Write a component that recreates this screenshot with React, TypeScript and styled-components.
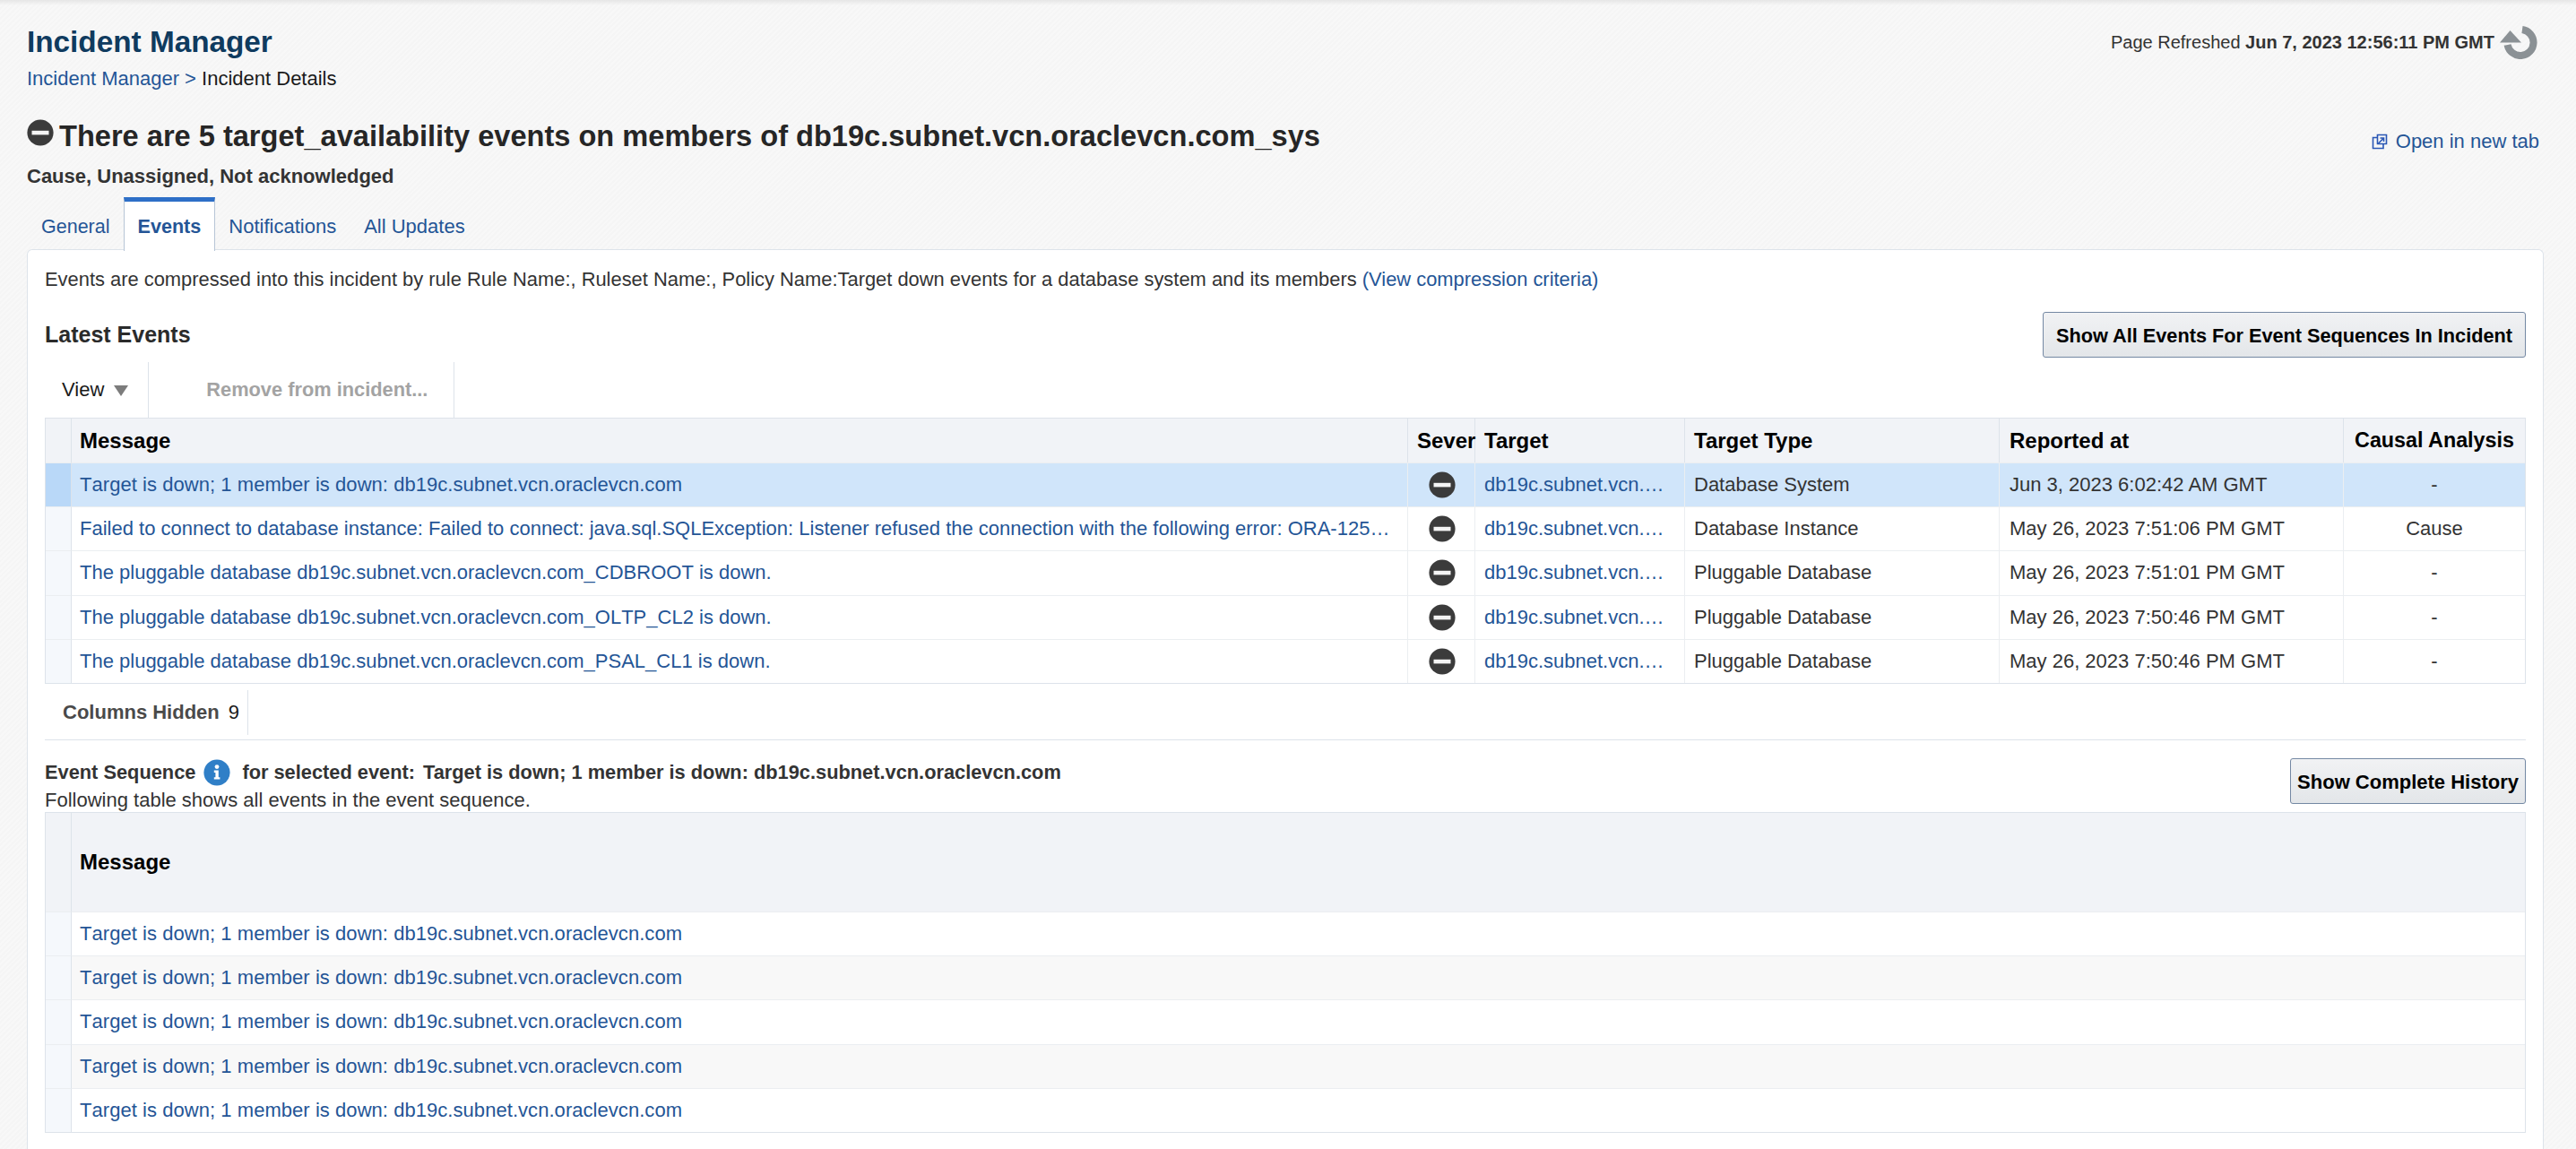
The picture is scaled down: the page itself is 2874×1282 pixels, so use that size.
import React, { FC } from "react";
import styled, { createGlobalStyle } from "styled-components";

const GlobalStyle = createGlobalStyle`
    html, body {
        margin: 0;
        padding: 0;
    }
    body {
        font-family: "Liberation Sans", Arial, Helvetica, sans-serif;
        font-size: 22px;
        color: #333;
        background-color: #f7f7f7;
        background-image:
            linear-gradient(180deg, #e6e6e6 0, rgba(230,230,230,0) 6px),
            repeating-linear-gradient(135deg, #f8f8f8 0, #f8f8f8 2px, #f5f5f5 2px, #f5f5f5 4px);
        background-repeat: no-repeat, repeat;
    }
`;

const LINK = "#245596";
const BORDER = "#dde3ea";
const CELL_LINE = "#ebeef1";

const Page = styled.div`
    width: 2874px;
    height: 1282px;
    box-sizing: border-box;
    padding: 27px 36px 0 30px;
    overflow: hidden;
`;

const TopRow = styled.div`
    display: flex;
    justify-content: space-between;
    align-items: center;
    height: 40px;
`;

const AppTitle = styled.div`
    font-size: 33.3px;
    line-height: 40px;
    font-weight: 700;
    color: #0f3b5f;
`;

const Refreshed = styled.div`
    display: flex;
    align-items: center;
    gap: 5px;
    font-size: 20px;
    color: #333;
    margin-right: 4px;
    & b {
        font-weight: 700;
    }
`;

const Breadcrumb = styled.div`
    margin-top: 6px;
    line-height: 30px;
    color: #1a1a1a;
`;

const Link = styled.a`
    color: ${LINK};
    text-decoration: none;
`;

const CellLink = styled(Link)<{ $spaced?: boolean }>`
    font-kerning: none;
    letter-spacing: ${(p) => (p.$spaced ? "0.05px" : "0")};
`;

const HeadRow = styled.div`
    display: flex;
    justify-content: space-between;
    height: 40px;
    margin-top: 29px;
`;

const Headline = styled.h1`
    display: flex;
    gap: 6px;
    margin: 0;
    font-size: 32.6px;
    line-height: 40px;
    font-weight: 700;
    color: #262626;
    & > svg {
        margin-top: 1px;
    }
`;

const NewTab = styled.a`
    display: flex;
    align-items: center;
    gap: 9px;
    align-self: flex-end;
    height: 28px;
    margin-right: 5px;
    color: ${LINK};
    text-decoration: none;
`;

const Status = styled.div`
    margin-top: 10px;
    line-height: 30px;
    font-weight: 700;
    color: #333;
`;

const Tabs = styled.div`
    display: flex;
    height: 60px;
    margin: 8px 0 -2px 1px;
    position: relative;
    z-index: 1;
    & > a:first-child {
        font-size: 21.5px;
    }
    & > a:nth-child(3) {
        padding-right: 16px;
    }
`;

const Tab = styled.a<{ $active?: boolean }>`
    display: flex;
    align-items: center;
    box-sizing: border-box;
    padding: ${(p) => (p.$active ? "1px 15px 0" : "6px 15px 0")};
    color: ${LINK};
    font-size: ${(p) => (p.$active ? "21.6px" : "22px")};
    font-weight: ${(p) => (p.$active ? 700 : 400)};
    background: ${(p) => (p.$active ? "#fff" : "transparent")};
    border-top: ${(p) => (p.$active ? "5px solid #2e6fc7" : "0")};
    border-left: ${(p) => (p.$active ? "1px solid #b7c5d6" : "0")};
    border-right: ${(p) => (p.$active ? "1px solid #b7c5d6" : "0")};
`;

const Panel = styled.div`
    background: #fff;
    border: 1px solid ${BORDER};
    border-bottom: 0;
    border-radius: 6px 6px 0 0;
    padding: 18px 19px 18px 19px;
`;

const Note = styled.div`
    font-size: 21.9px;
    line-height: 30px;
    color: #333;
`;

const SectionRow = styled.div`
    display: flex;
    justify-content: space-between;
    align-items: center;
    height: 50px;
    margin-top: 21px;
`;

const SectionTitle = styled.div`
    font-size: 25px;
    font-weight: 700;
    color: #2b2b2b;
`;

const Button = styled.button<{ $compact?: boolean }>`
    box-sizing: border-box;
    height: 51px;
    padding: ${(p) => (p.$compact ? "3px 7px 0" : "3px 14px 0")};
    font-family: inherit;
    font-size: ${(p) => (p.$compact ? "22px" : "21.7px")};
    font-weight: 700;
    color: #000;
    background: linear-gradient(180deg, #f1f2f4 0%, #e3e6e9 100%);
    border: 1px solid #7488a3;
    border-radius: 3px;
`;

const Toolbar = styled.div`
    display: flex;
    height: 62px;
    margin-top: 6px;
`;

const ToolItem = styled.div<{ $pad: string; $muted?: boolean }>`
    display: flex;
    align-items: center;
    gap: 11px;
    padding: ${(p) => p.$pad};
    border-right: 1px solid ${BORDER};
    color: ${(p) => (p.$muted ? "#a3a3a3" : "#1a1a1a")};
    font-size: ${(p) => (p.$muted ? "21.8px" : "22px")};
    font-weight: ${(p) => (p.$muted ? 700 : 400)};
`;

const Caret = styled.span`
    width: 0;
    height: 0;
    margin-top: 2px;
    border-left: 8px solid transparent;
    border-right: 8px solid transparent;
    border-top: 12px solid #7c7c7c;
`;

const Table = styled.table`
    width: 2768px;
    table-layout: fixed;
    border-collapse: separate;
    border-spacing: 0;
    border: 1px solid ${BORDER};
`;

const Th = styled.th<{ $center?: boolean; $tall?: boolean; $clip?: boolean; $size?: string; $pad?: string }>`
    box-sizing: border-box;
    height: ${(p) => (p.$tall ? "110px" : "49px")};
    padding: ${(p) => p.$pad || (p.$clip ? "0 0 0 10px" : "0 10px")};
    background: #f1f3f7;
    border-right: 1px solid ${BORDER};
    font-size: ${(p) => p.$size || "24px"};
    font-weight: 700;
    color: #000;
    text-align: ${(p) => (p.$center ? "center" : "left")};
    white-space: nowrap;
    &:nth-child(2) {
        padding-left: 9px;
    }
    &:last-child {
        border-right: 0;
    }
`;

const Tr = styled.tr<{ $bg?: string; $headBg?: string }>`
    background: ${(p) => p.$bg || "#fff"};
    & > td:first-child {
        background: ${(p) => p.$headBg || "#f5f8fc"};
        border-right: 1px solid ${BORDER};
    }
`;

const Td = styled.td<{ $center?: boolean; $pad?: string }>`
    box-sizing: border-box;
    height: 49.2px;
    padding: ${(p) => p.$pad || "0 10px"};
    border-top: 1px solid ${CELL_LINE};
    border-right: 1px solid ${CELL_LINE};
    color: #333;
    text-align: ${(p) => (p.$center ? "center" : "left")};
    white-space: nowrap;
    &:last-child {
        border-right: 0;
    }
    & > svg {
        display: block;
        margin: 0 auto;
    }
`;

const FooterBar = styled.div`
    display: flex;
    margin-top: 7px;
    padding-bottom: 5px;
    border-bottom: 1px solid ${BORDER};
    width: 2768px;
`;

const HiddenCount = styled.div`
    display: flex;
    align-items: center;
    gap: 10px;
    height: 50px;
    padding: 0 9px 0 20px;
    border-right: 1px solid ${BORDER};
    color: #1a1a1a;
    & b {
        color: #4a4a4a;
    }
`;

const SequenceRow = styled.div`
    display: flex;
    justify-content: space-between;
    height: 60px;
    margin-top: 20px;
    width: 2768px;
`;

const SequenceText = styled.div`
    padding-top: 1px;
`;

const SequenceTitle = styled.div`
    display: flex;
    align-items: center;
    height: 30px;
    font-size: 21.8px;
    font-weight: 700;
    color: #333;
    white-space: pre;
`;

const SelectedMessage = styled.span`
    margin-left: 9px;
`;

const SequenceNote = styled.div`
    margin-top: 4px;
    line-height: 24px;
    color: #333;
`;

const InfoWrap = styled.span`
    display: inline-flex;
    margin: 0 13px 0 9px;
`;

const MinusIcon: FC = () => (
    <svg width="30" height="30" viewBox="0 0 30 30">
        <circle cx="15" cy="15" r="14.6" fill="#3b3b3b" />
        <rect x="5.5" y="12.8" width="19" height="4.6" fill="#f4f4f4" />
    </svg>
);

const RefreshIcon: FC = () => (
    <svg width="46" height="38" viewBox="0 0 46 38">
        <path d="M26 5 A14.6 14.6 0 1 1 9.6 22" fill="none" stroke="#8b9195" strokeWidth="8" />
        <path d="M1 19.5 L25 19.5 L12.5 6 Z" fill="#8b9195" />
    </svg>
);

const OpenTabIcon: FC = () => (
    <svg width="18" height="18" viewBox="0 0 18 18" fill="none" stroke="#2a57b5" strokeWidth="1.6">
        <path d="M6 4.5 H1.5 V16.5 H13 V12" />
        <path d="M6.5 1.5 H16.5 V11.5 H6.5 Z" />
        <path d="M7.5 11 L13 5.5 M9.5 5 H13.5 V9" />
    </svg>
);

const InfoIcon: FC = () => (
    <svg width="30" height="30" viewBox="0 0 30 30">
        <circle cx="15" cy="15" r="14.6" fill="#2f7fc7" />
        <circle cx="15" cy="8.6" r="2.4" fill="#fff" />
        <path d="M11.8 12.5 H16.8 V20.2 H18.4 V22.6 H11.8 V20.2 H13.4 V14.9 H11.8 Z" fill="#fff" />
    </svg>
);

const TARGET = "db19c.subnet.vcn.oraclevcn.com";
const TARGET_CUT = "db19c.subnet.vcn.…";
const DOWN_MESSAGE = "Target is down; 1 member is down: " + TARGET;

const latestEvents = [
    { message: DOWN_MESSAGE, spaced: true, type: "Database System", reported: "Jun 3, 2023 6:02:42 AM GMT", cause: "-" },
    {
        message:
            "Failed to connect to database instance: Failed to connect: java.sql.SQLException: Listener refused the connection with the following error: ORA-125…",
        type: "Database Instance",
        reported: "May 26, 2023 7:51:06 PM GMT",
        cause: "Cause",
    },
    { message: `The pluggable database ${TARGET}_CDBROOT is down.`, type: "Pluggable Database", reported: "May 26, 2023 7:51:01 PM GMT", cause: "-" },
    { message: `The pluggable database ${TARGET}_OLTP_CL2 is down.`, type: "Pluggable Database", reported: "May 26, 2023 7:50:46 PM GMT", cause: "-" },
    { message: `The pluggable database ${TARGET}_PSAL_CL1 is down.`, type: "Pluggable Database", reported: "May 26, 2023 7:50:46 PM GMT", cause: "-" },
];

const sequence = [0, 1, 2, 3, 4];

const App: FC = () => {
    return (
        <Page>
            <GlobalStyle />
            <TopRow>
                <AppTitle>Incident Manager</AppTitle>
                <Refreshed>
                    <span>
                        Page Refreshed <b>Jun 7, 2023 12:56:11 PM GMT</b>
                    </span>
                    <RefreshIcon />
                </Refreshed>
            </TopRow>
            <Breadcrumb>
                <Link>Incident Manager &gt;</Link> Incident Details
            </Breadcrumb>
            <HeadRow>
                <Headline>
                    <MinusIcon />
                    There are 5 target_availability events on members of db19c.subnet.vcn.oraclevcn.com_sys
                </Headline>
                <NewTab>
                    <OpenTabIcon />
                    Open in new tab
                </NewTab>
            </HeadRow>
            <Status>Cause, Unassigned, Not acknowledged</Status>
            <Tabs>
                <Tab>General</Tab>
                <Tab $active>Events</Tab>
                <Tab>Notifications</Tab>
                <Tab>All Updates</Tab>
            </Tabs>
            <Panel>
                <Note>
                    Events are compressed into this incident by rule Rule Name:, Ruleset Name:, Policy Name:Target down events for a database system and its members{" "}
                    <Link>(View compression criteria)</Link>
                </Note>
                <SectionRow>
                    <SectionTitle>Latest Events</SectionTitle>
                    <Button>Show All Events For Event Sequences In Incident</Button>
                </SectionRow>
                <Toolbar>
                    <ToolItem $pad="0 22px 0 19px">
                        View
                        <Caret />
                    </ToolItem>
                    <ToolItem $pad="0 29px 0 64px" $muted>
                        Remove from incident...
                    </ToolItem>
                </Toolbar>
                <Table>
                    <colgroup>
                        <col width="29" />
                        <col width="1491" />
                        <col width="75" />
                        <col width="234" />
                        <col width="351" />
                        <col width="384" />
                        <col width="202" />
                    </colgroup>
                    <thead>
                        <tr>
                            <Th />
                            <Th>Message</Th>
                            <Th $clip>Sever</Th>
                            <Th>Target</Th>
                            <Th>Target Type</Th>
                            <Th $pad="0 10px 0 11px">Reported at</Th>
                            <Th $center $size="23.3px">Causal Analysis</Th>
                        </tr>
                    </thead>
                    <tbody>
                        {latestEvents.map((row, i) => (
                            <Tr key={i} $bg={i === 0 ? "#d0e5fa" : undefined} $headBg={i === 0 ? "#b9d8f8" : undefined}>
                                <Td />
                                <Td $pad="0 9px">
                                    <CellLink $spaced={row.spaced}>{row.message}</CellLink>
                                </Td>
                                <Td $pad="0 0 0 1px">
                                    <MinusIcon />
                                </Td>
                                <Td $pad="0 10px">
                                    <Link>{TARGET_CUT}</Link>
                                </Td>
                                <Td>{row.type}</Td>
                                <Td $pad="0 10px 0 11px">{row.reported}</Td>
                                <Td $center>{row.cause}</Td>
                            </Tr>
                        ))}
                    </tbody>
                </Table>
                <FooterBar>
                    <HiddenCount>
                        <b>Columns Hidden</b> 9
                    </HiddenCount>
                </FooterBar>
                <SequenceRow>
                    <SequenceText>
                        <SequenceTitle>
                            Event Sequence
                            <InfoWrap>
                                <InfoIcon />
                            </InfoWrap>
                            for selected event:
                            <SelectedMessage>{DOWN_MESSAGE}</SelectedMessage>
                        </SequenceTitle>
                        <SequenceNote>Following table shows all events in the event sequence.</SequenceNote>
                    </SequenceText>
                    <Button $compact>Show Complete History</Button>
                </SequenceRow>
                <Table>
                    <colgroup>
                        <col width="29" />
                        <col />
                    </colgroup>
                    <thead>
                        <tr>
                            <Th $tall />
                            <Th $tall>Message</Th>
                        </tr>
                    </thead>
                    <tbody>
                        {sequence.map((i) => (
                            <Tr key={i} $bg={i % 2 === 1 ? "#f8f8f8" : undefined}>
                                <Td />
                                <Td $pad="0 9px">
                                    <CellLink $spaced>{DOWN_MESSAGE}</CellLink>
                                </Td>
                            </Tr>
                        ))}
                    </tbody>
                </Table>
            </Panel>
        </Page>
    );
};

export default App;
